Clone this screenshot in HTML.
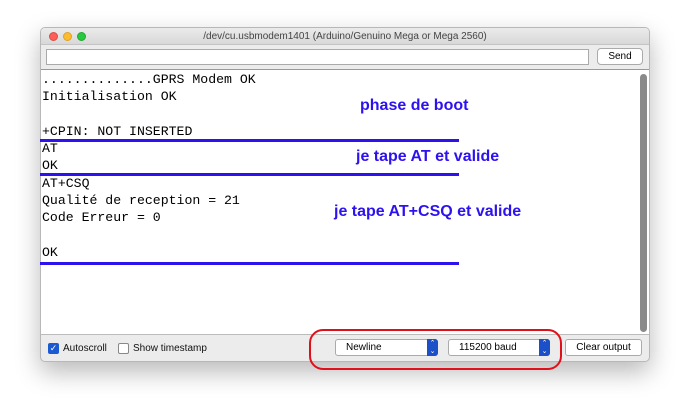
<!DOCTYPE html>
<html><head><style>
*{margin:0;padding:0;box-sizing:border-box}
body{width:690px;height:415px;background:#fff;position:relative;overflow:hidden;font-family:"Liberation Sans",sans-serif}
.win{position:absolute;left:40px;top:27px;width:610px;height:335px;background:#ececec;border:1px solid #b8b8b8;border-radius:5px;box-shadow:0 10px 25px rgba(0,0,0,.28);overflow:hidden}
.title{height:17px;background:linear-gradient(#ebebeb,#d8d8d8);border-bottom:1px solid #c4c4c4;font-size:10px;color:#444;text-align:center;line-height:17px}
.dot{position:absolute;top:4px;width:9px;height:9px;border-radius:50%}
.inp{position:absolute;left:5px;top:21px;width:543px;height:16px;background:#fff;border:1px solid #aaa}
.send{position:absolute;left:556px;top:20px;width:46px;height:17px;background:#fff;border:1px solid #aaa;border-radius:4px;font-size:10px;text-align:center;line-height:15px}
.ta{position:absolute;left:0;top:41px;width:608px;height:266px;background:#fff;border-top:1px solid #999;border-bottom:1px solid #bbb}
.txt{position:absolute;left:1px;top:1px;font-family:"Liberation Mono",monospace;font-size:13.2px;line-height:17.3px;color:#000;white-space:pre}
.sb{position:absolute;left:599px;top:4px;width:7px;height:258px;background:#8a8a8a;border-radius:4px}
.bl{position:absolute;left:40px;width:419px;height:3px;background:#2d12f0}
.note{position:absolute;color:#2d12f0;font-weight:bold;font-size:16px}
.bot{font-size:10px;color:#111}
.sel{position:absolute;top:339px;height:17px;background:#fff;border:1px solid #aaa;border-radius:3px;font-size:10px;line-height:15px;padding-left:10px}
.arr{position:absolute;right:-1px;top:-1px;width:11px;height:17px;background:#1b50c8;border-radius:0 3px 3px 0;color:#fff;font-size:7px;text-align:center;line-height:8px;padding-top:1px}
</style></head><body>
<div class="win">
<div class="title">/dev/cu.usbmodem1401 (Arduino/Genuino Mega or Mega 2560)</div>
<div class="dot" style="left:8px;background:#fc5f57;border:1px solid #de4a42"></div>
<div class="dot" style="left:22px;background:#fdbc2e;border:1px solid #dfa021"></div>
<div class="dot" style="left:36px;background:#28c840;border:1px solid #1faa30"></div>
<div class="inp"></div>
<div class="send">Send</div>
<div class="ta"><div class="txt">..............GPRS Modem OK
Initialisation OK

+CPIN: NOT INSERTED
AT
OK
AT+CSQ
Qualité de reception = 21
Code Erreur = 0

OK</div><div class="sb"></div></div>
</div>
<div class="bl" style="top:139px"></div>
<div class="bl" style="top:173px"></div>
<div class="bl" style="top:262px"></div>
<div class="note" style="left:360px;top:97px">phase de boot</div>
<div class="note" style="left:356px;top:148px">je tape AT et valide</div>
<div class="note" style="left:334px;top:203px">je tape AT+CSQ et valide</div>
<div style="position:absolute;left:48px;top:343px;width:11px;height:11px;background:#1b5ad0;border-radius:2px;color:#fff;font-size:9px;line-height:11px;text-align:center">✓</div>
<div class="bot" style="position:absolute;left:63px;top:343px">Autoscroll</div>
<div style="position:absolute;left:118px;top:343px;width:11px;height:11px;background:#fff;border:1px solid #888;border-radius:2px"></div>
<div class="bot" style="position:absolute;left:133px;top:343px">Show timestamp</div>
<div class="sel" style="left:335px;width:103px">Newline<div class="arr">⌃<br>⌄</div></div>
<div class="sel" style="left:448px;width:102px">115200 baud<div class="arr">⌃<br>⌄</div></div>
<div style="position:absolute;left:565px;top:339px;width:77px;height:17px;background:#fff;border:1px solid #aaa;border-radius:3px;font-size:10px;line-height:15px;text-align:center">Clear output</div>
<div style="position:absolute;left:309px;top:329px;width:253px;height:41px;border:2px solid #e0101a;border-radius:14px"></div>
</body></html>
